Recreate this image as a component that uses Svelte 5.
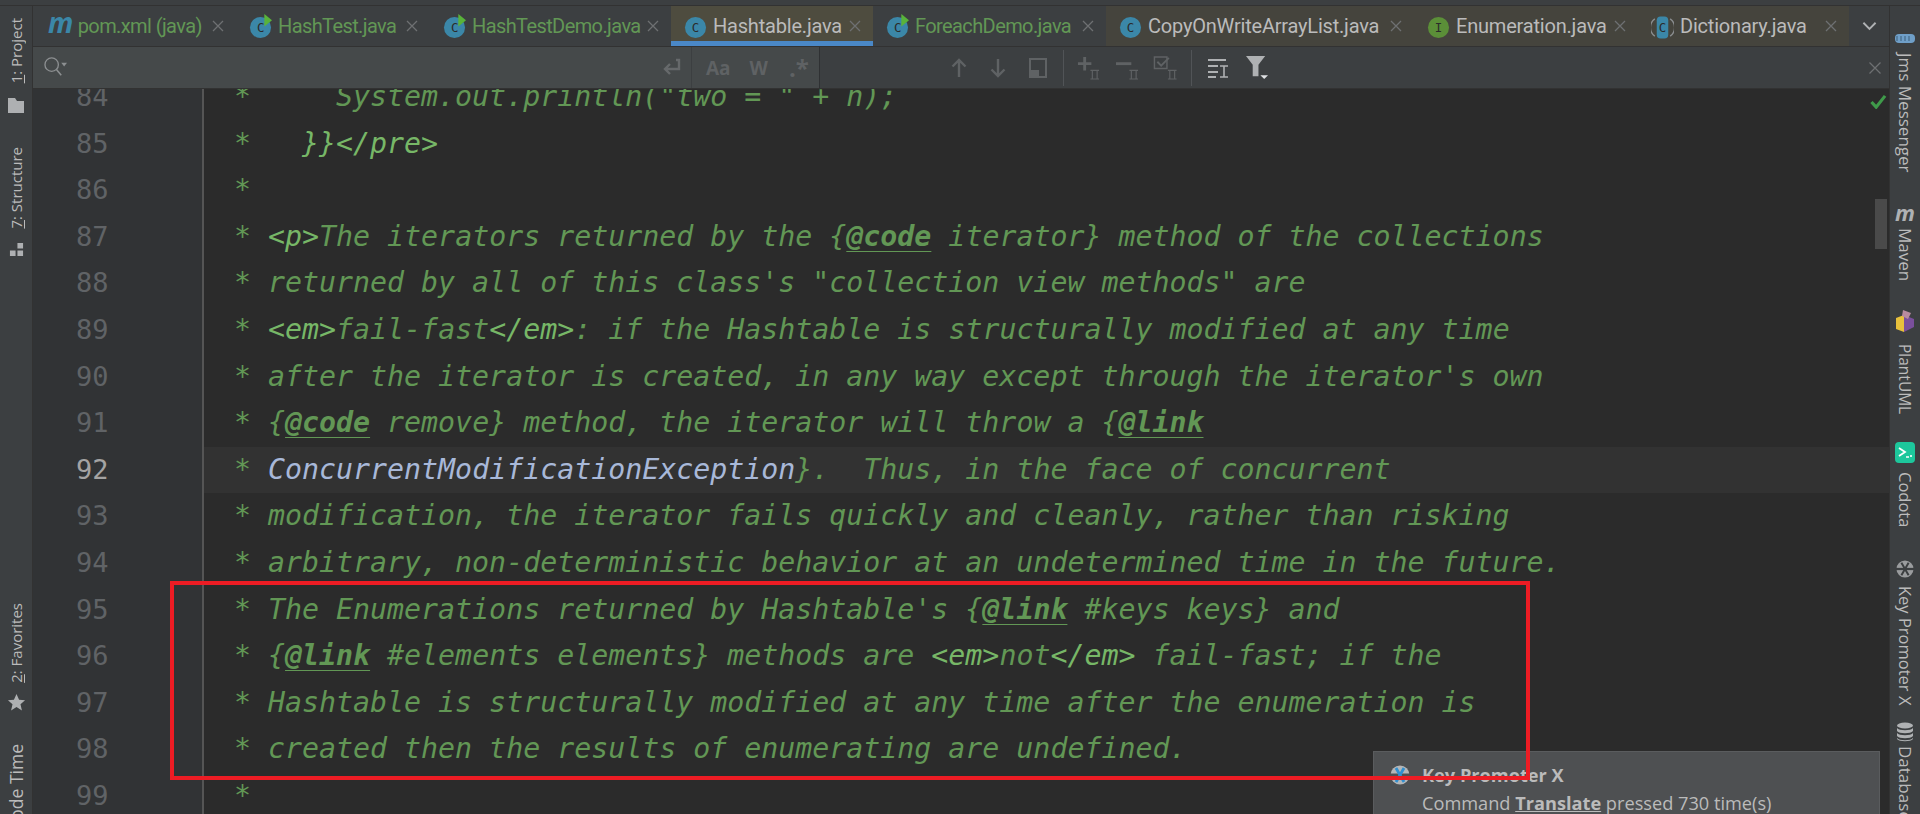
<script>
  const tabs = [
    { name: "pom.xml (java)", icon: "m", run: true, width: 203 },
    { name: "HashTest.java", icon: "c", run: true, width: 194 },
    { name: "HashTestDemo.java", icon: "c", run: true, width: 241 },
    { name: "Hashtable.java", icon: "c", active: true, width: 202 },
    { name: "ForeachDemo.java", icon: "c", run: true, width: 233 },
    { name: "CopyOnWriteArrayList.java", icon: "c", width: 308 },
    { name: "Enumeration.java", icon: "i", width: 224 },
    { name: "Dictionary.java", icon: "a", width: 211 },
  ];

  // t = tag, k = doc keyword, r = class reference, plain strings are comment text
  const lines = [
    [84, '*     System.out.println("two = " + n);'],
    [85, "*   ", { t: "}}</pre>" }],
    [86, "*"],
    [87, "* ", { t: "<p>" }, "The iterators returned by the {", { k: "@code" }, " iterator} method of the collections"],
    [88, '* returned by all of this class\'s "collection view methods" are'],
    [89, "* ", { t: "<em>" }, "fail-fast", { t: "</em>" }, ": if the Hashtable is structurally modified at any time"],
    [90, "* after the iterator is created, in any way except through the iterator's own"],
    [91, "* {", { k: "@code" }, " remove} method, the iterator will throw a {", { k: "@link" }],
    [92, "* ", { r: "ConcurrentModificationException" }, "}.  Thus, in the face of concurrent"],
    [93, "* modification, the iterator fails quickly and cleanly, rather than risking"],
    [94, "* arbitrary, non-deterministic behavior at an undetermined time in the future."],
    [95, "* The Enumerations returned by Hashtable's {", { k: "@link" }, " #keys keys} and"],
    [96, "* {", { k: "@link" }, " #elements elements} methods are ", { t: "<em>" }, "not", { t: "</em>" }, " fail-fast; if the"],
    [97, "* Hashtable is structurally modified at any time after the enumeration is"],
    [98, "* created then the results of enumerating are undefined."],
    [99, "*"],
  ];
</script>

{#snippet fileIcon(kind, run)}
  {#if kind === "m"}
    <span class="maven-m">m</span>
  {:else}
    <svg class="file-icon" viewBox="0 0 24 26" width="23" height="25">
      {#if kind === "a"}
        <path d="M4 5a11 11 0 0 0 0 18" fill="none" stroke="#8a8d8f" stroke-width="1.5" />
        <path d="M20 5a11 11 0 0 1 0 18" fill="none" stroke="#8a8d8f" stroke-width="1.5" />
        <rect x="6" y="2.5" width="12" height="23" rx="4" fill="#3b87a8" />
      {:else}
        <circle cx="12" cy="14" r="11" fill={kind === "i" ? "#5b8f38" : "#3b87a8"} />
      {/if}
      <text x="12" y="18.5" class="icon-letter">{kind === "i" ? "I" : "C"}</text>
      {#if run}
        <path d="M16 0l8 6.5-8 6.5z" fill="#59b33a" />
      {/if}
    </svg>
  {/if}
{/snippet}

{#snippet promoter(band, cross)}
  <svg viewBox="0 0 20 20" width="20" height="20">
    <circle cx="10" cy="10" r="9.5" fill="#b4b6b8" />
    <path d="M0 10h20" stroke={band} stroke-width="3" />
    <path d="M6 3l8 14M14 3L6 17" stroke={cross} stroke-width="2.8" />
  </svg>
{/snippet}

<div class="ide">
  <div class="top-strip"></div>
  <div class="body">
    <aside class="side left">
      <div class="side-group">
        <div class="tool first"><span class="vert"><u>1</u>: Project</span>
          <svg viewBox="0 0 16 15" width="16" height="15"><path d="M0 0h7l2 3h7v12H0z" fill="#aeb0b2" /></svg>
        </div>
        <div class="tool structure"><span class="vert"><u>7</u>: Structure</span>
          <svg viewBox="0 0 16 16" width="15" height="15"><path d="M9 1h6v6H9zM1 9h6v6H1zM9 9h6v6H9z" fill="#aeb0b2" /></svg>
        </div>
      </div>
      <div class="side-group bottom">
        <div class="tool favorites"><span class="vert"><u>2</u>: Favorites</span>
          <svg viewBox="0 0 20 20" width="19" height="19"><path d="M10 1l2.7 6 6.3.6-4.8 4.2 1.5 6.5L10 14.8l-5.7 3.5 1.5-6.5L1 7.6 7.3 7z" fill="#aeb0b2" /></svg>
        </div>
        <div class="tool code-time"><span class="vert">Code Time</span></div>
      </div>
    </aside>

    <main class="center">
      <div class="tabs">
        {#each tabs as tab}
          <div class="tab" class:run={tab.run} class:active={tab.active} style="width: {tab.width}px">
            {@render fileIcon(tab.icon, tab.run)}
            <span class="tab-name">{tab.name}</span>
            <svg class="tab-close" viewBox="0 0 12 12" width="12" height="12"><path d="M1 1l10 10M11 1L1 11" stroke="#6e7072" stroke-width="1.3" /></svg>
          </div>
        {/each}
        <div class="tab-more">
          <svg viewBox="0 0 16 10" width="15" height="10"><path d="M1.5 1.5L8 8l6.5-6.5" fill="none" stroke="#afb1b3" stroke-width="2" /></svg>
        </div>
      </div>

      <div class="find">
        <div class="find-input">
          <svg class="find-search" viewBox="0 0 26 24" width="25" height="23">
            <circle cx="9" cy="9" r="7" fill="none" stroke="#8c8f91" stroke-width="1.4" />
            <path d="M14 14l5 6" stroke="#8c8f91" stroke-width="1.6" />
            <path d="M19 7h6l-3 4z" fill="#8c8f91" />
          </svg>
          <svg class="find-wrap" viewBox="0 0 20 20" width="20" height="20">
            <path d="M15 2h3v9H5M9 6l-5 5 5 5" fill="none" stroke="#66696b" stroke-width="2.4" />
          </svg>
          <i class="opt-sep"></i>
          <span class="opt aa">Aa</span>
          <span class="opt w">W</span>
          <span class="opt rx">.*</span>
        </div>
        <div class="find-tools">
          <svg viewBox="0 0 16 20" width="16" height="20"><path d="M8 19V2M1.5 8.5L8 2l6.5 6.5" fill="none" stroke="#5f6264" stroke-width="2.4" /></svg>
          <svg class="m-down" viewBox="0 0 16 20" width="16" height="20"><path d="M8 1v17M1.5 11.5L8 18l6.5-6.5" fill="none" stroke="#5f6264" stroke-width="2.4" /></svg>
          <svg class="m-box" viewBox="0 0 18 20" width="18" height="20"><path d="M1 1h16v18H1z" fill="none" stroke="#5f6264" stroke-width="2" /><path d="M1 12h9v7H1z" fill="#5f6264" /></svg>
          <i class="sep s1"></i>
          <svg class="m-plus" viewBox="0 0 24 26" width="23" height="25"><path d="M8 2v14M1 9h14" stroke="#5f6264" stroke-width="3" /><path d="M14 16h9M14 25h9M16 16v9M21 16v9" stroke="#5f6264" stroke-width="1.2" /></svg>
          <svg class="m-minus" viewBox="0 0 24 26" width="23" height="25"><path d="M0 9h16" stroke="#5f6264" stroke-width="3" /><path d="M14 16h9M14 25h9M16 16v9M21 16v9" stroke="#5f6264" stroke-width="1.2" /></svg>
          <svg class="m-check" viewBox="0 0 25 26" width="25" height="25"><path d="M1 2h13v12H1z" fill="none" stroke="#5f6264" stroke-width="1.5" /><path d="M4 7l4 4 8-8" fill="none" stroke="#5f6264" stroke-width="2" /><path d="M15 16h9M15 25h9M17 16v9M22 16v9" stroke="#5f6264" stroke-width="1.2" /></svg>
          <i class="sep s2"></i>
          <svg class="m-sort" viewBox="0 0 20 20" width="20" height="20"><path d="M0 2h18M0 8h10M0 14h10M0 19h8" stroke="#afb1b3" stroke-width="2" /><path d="M12 8h8M12 19h8M16 8v11" stroke="#afb1b3" stroke-width="1.6" /></svg>
          <svg class="m-filter" viewBox="0 0 24 26" width="23" height="25"><path d="M0 1h20l-7 9v12H7V10z" fill="#afb1b3" /><path d="M15 21h8l-4 4z" fill="#dfe1e3" /></svg>
          <svg class="find-close" viewBox="0 0 12 12" width="12" height="12"><path d="M0.5 0.5l11 11M11.5 0.5l-11 11" stroke="#6e7072" stroke-width="1.3" /></svg>
        </div>
      </div>

      <div class="editor">
        <div class="lines">
          {#each lines as [num, ...parts]}
            <div class="line" class:current={num === 92}>
              <span class="num">{num}</span>
              <code class="code">{#each parts as part}{#if typeof part === "string"}{part}{:else if part.t}<span class="tag">{part.t}</span>{:else if part.k}<span class="key">{part.k}</span>{:else}<span class="ref">{part.r}</span>{/if}{/each}</code>
            </div>
          {/each}
        </div>

        <svg class="ok" viewBox="0 0 18 16" width="17" height="15"><path d="M1.5 8.5L6.5 14 16 2" fill="none" stroke="#3f9a4a" stroke-width="3.4" /></svg>
        <div class="thumb"></div>

        <div class="balloon">
          <div class="balloon-title">
            {@render promoter("#4e5052", "#2f8fd0")}
            <b>Key Promoter X</b>
          </div>
          <div class="balloon-body">Command <b><u>Translate</u></b> pressed 730 time(s)</div>
        </div>
        <div class="red-box"></div>
      </div>
    </main>

    <aside class="side right">
      <div class="tool r-jms">
        <svg viewBox="0 0 20 10" width="20" height="10"><rect x="0" y="1" width="20" height="9" rx="4" fill="#6f9fc8" /><path d="M2 3v5M6 3v5M10 3v5M14 3v5" stroke="#3c5f7a" stroke-width="1" /></svg>
        <span class="vert">Jms Messenger</span>
      </div>
      <div class="tool r-maven"><span class="maven-side">m</span><span class="vert">Maven</span></div>
      <div class="tool r-plant">
        <svg viewBox="0 0 20 24" width="20" height="24"><path d="M1 9l8-3v17l-8-3z" fill="#e8c13c" /><path d="M9 6l10 4v8l-10 5z" fill="#7a4f9c" /><path d="M8 1l8 3-3 6-6-3z" fill="#b98aa0" /></svg>
        <span class="vert">PlantUML</span>
      </div>
      <div class="tool r-codota">
        <svg viewBox="0 0 20 21" width="20" height="21"><rect width="20" height="21" rx="4" fill="#1dc79c" /><path d="M4 6l6 4-6 4" fill="none" stroke="#fff" stroke-width="1.8" /><path d="M11 15h3M16 13v2" stroke="#fff" stroke-width="1.6" /></svg>
        <span class="vert">Codota</span>
      </div>
      <div class="tool r-key">
        <svg viewBox="0 0 20 20" width="18" height="18"><circle cx="10" cy="10" r="9.5" fill="#9a9c9e" /><path d="M0 10h20" stroke="#3c3f41" stroke-width="2.5" /><path d="M6 3l8 14M14 3L6 17" stroke="#3c3f41" stroke-width="2.2" /></svg>
        <span class="vert">Key Promoter X</span>
      </div>
      <div class="tool r-db">
        <svg viewBox="0 0 18 20" width="18" height="20"><ellipse cx="9" cy="3.5" rx="8" ry="3" fill="#afb1b3" /><path d="M1 6c2 3 14 3 16 0v3c-2 3-14 3-16 0zM1 11c2 3 14 3 16 0v3c-2 3-14 3-16 0zM1 16c2 3 14 3 16 0v1c-2 3-14 3-16 0z" fill="#afb1b3" /></svg>
        <span class="vert">Database</span>
      </div>
    </aside>
  </div>
</div>

<style>
  :global(body) {
    margin: 0;
    background: #2b2b2b;
    overflow: hidden;
  }

  .ide {
    width: 1920px;
    height: 814px;
    display: flex;
    flex-direction: column;
    overflow: hidden;
    font-family: Roboto, "Open Sans", sans-serif;
  }

  .top-strip {
    height: 6px;
    flex: none;
    background: #3c3f41;
    border-bottom: 1px solid #323232;
    box-sizing: border-box;
  }

  .body {
    flex: 1;
    min-height: 0;
    display: flex;
  }

  /* tool window bars */
  .side {
    flex: none;
    background: #3c3f41;
    display: flex;
    flex-direction: column;
    color: #bbbbbb;
    font-family: "Open Sans", sans-serif;
    font-size: 17px;
    overflow: hidden;
    box-sizing: border-box;
  }

  .side.left {
    width: 33px;
    justify-content: space-between;
    border-right: 1px solid #323232;
    font-size: 15px;
  }

  .side.right {
    width: 31px;
    padding-top: 27px;
    border-left: 1px solid #323232;
  }

  .side-group {
    flex: none;
  }

  .side-group.bottom {
    margin-bottom: -17px;
  }

  .tool {
    flex: none;
    display: flex;
    flex-direction: column;
    align-items: center;
  }

  .vert {
    writing-mode: vertical-rl;
    white-space: nowrap;
    line-height: 20px;
  }

  .left .vert {
    transform: rotate(180deg);
  }

  .tool.first {
    padding-top: 12px;
    gap: 15px;
  }

  .tool.structure {
    padding-top: 34px;
    gap: 13px;
  }

  .tool.favorites {
    gap: 10px;
  }

  .tool.code-time {
    margin-top: 32px;
    font-size: 17.5px;
  }

  .r-jms {
    gap: 10px;
  }

  .r-maven {
    margin-top: 28px;
    gap: 5px;
  }

  .r-plant {
    margin-top: 28px;
    gap: 11px;
    font-size: 15.5px;
  }

  .r-codota {
    margin-top: 28px;
    gap: 9px;
    font-size: 16.5px;
  }

  .r-key {
    margin-top: 33px;
    gap: 8px;
    font-size: 16.5px;
  }

  .r-db {
    margin-top: 16px;
    gap: 4px;
  }

  .maven-side {
    font: italic bold 22px/22px "Open Sans", sans-serif;
    color: #afb1b3;
  }

  /* editor tabs */
  .center {
    flex: 1;
    min-width: 0;
    display: flex;
    flex-direction: column;
  }

  .tabs {
    height: 40px;
    flex: none;
    display: flex;
    background: #3c3f41;
    border-bottom: 1px solid #323232;
  }

  .tab {
    flex: none;
    display: flex;
    align-items: center;
    padding: 0 12px 0 13px;
    gap: 6px;
    background: #45443d;
    color: #bbbbbb;
    font-size: 20px;
    letter-spacing: -0.2px;
    white-space: nowrap;
    box-sizing: border-box;
  }

  .tab.run {
    background: #3c3f41;
    color: #629755;
    letter-spacing: -0.6px;
  }

  .tab.active {
    background: #4e4c3f;
    box-shadow: inset 0 -5px 0 #4a88c7;
  }

  .tab-close {
    margin-left: auto;
  }

  .tab-more {
    flex: 1;
    display: flex;
    align-items: center;
    justify-content: center;
  }

  .file-icon {
    flex: none;
  }

  .icon-letter {
    font: 13px "DejaVu Sans Mono", monospace;
    fill: #2b2b2b;
    text-anchor: middle;
  }

  .maven-m {
    font: italic bold 28px/28px "Open Sans", sans-serif;
    color: #3b87a8;
    margin-top: -8px;
    margin-left: 2px;
    margin-right: -1px;
  }

  /* find bar */
  .find {
    height: 42px;
    flex: none;
    display: flex;
    background: #3c3f41;
    border-bottom: 1px solid #323232;
    box-sizing: border-box;
  }

  .find-input {
    width: 787px;
    flex: none;
    display: flex;
    align-items: center;
    background: #45494a;
    border-right: 1px solid #2f3133;
    box-sizing: border-box;
    color: #5f6264;
    font: bold 19px "Open Sans", sans-serif;
  }

  .find-search {
    margin-left: 10px;
  }

  .find-wrap {
    margin-left: 593px;
  }

  .opt-sep {
    width: 1px;
    height: 41px;
    margin-left: 10px;
    background: #3c3f41;
  }

  .opt.aa {
    margin-left: 14px;
  }

  .opt.w {
    margin-left: 19px;
  }

  .opt.rx {
    margin-left: 21px;
    font-size: 24px;
  }

  .find-tools {
    flex: 1;
    display: flex;
    align-items: center;
    padding-left: 131px;
  }

  .m-down {
    margin-left: 23px;
  }

  .m-box {
    margin-left: 23px;
  }

  .sep {
    width: 1px;
    height: 36px;
    background: #515457;
  }

  .s1 {
    margin-left: 16px;
  }

  .m-plus {
    margin-left: 13px;
  }

  .m-minus {
    margin-left: 16px;
  }

  .m-check {
    margin-left: 14px;
  }

  .s2 {
    margin-left: 13px;
  }

  .m-sort {
    margin-left: 16px;
  }

  .m-filter {
    margin-left: 18px;
  }

  .find-close {
    margin-left: auto;
    margin-right: 8px;
  }

  /* code area */
  .editor {
    flex: 1;
    min-height: 0;
    position: relative;
    overflow: hidden;
    background: #2b2b2b;
  }

  .lines {
    margin-top: -15px;
  }

  .line {
    display: flex;
    height: 46.6px;
    line-height: 46.6px;
    font-family: "DejaVu Sans Mono", monospace;
    font-size: 28.25px;
  }

  .line.current {
    background: #323232;
  }

  .num {
    width: 171px;
    flex: none;
    box-sizing: border-box;
    padding-left: 43px;
    background: #313335;
    border-right: 2px solid #555555;
    color: #606366;
    font-size: 27px;
  }

  .current .num {
    color: #a4a3a3;
  }

  .code {
    font: inherit;
    font-style: italic;
    color: #629755;
    padding-left: 30px;
    white-space: pre;
  }

  .tag {
    color: #77b767;
  }

  .key {
    font-weight: bold;
    text-decoration: underline;
    text-underline-offset: 5px;
    text-decoration-thickness: 1px;
  }

  .ref {
    color: #a8b8d8;
  }

  .ok {
    position: absolute;
    right: 2px;
    top: 5px;
  }

  .thumb {
    position: absolute;
    right: 2px;
    top: 110px;
    width: 12px;
    height: 50px;
    background: #4a4a4a;
  }

  .balloon {
    position: absolute;
    left: 1340px;
    top: 662px;
    width: 507px;
    height: 80px;
    box-sizing: border-box;
    padding: 11px 0 0 16px;
    background: #4e5052;
    border: 1px solid #5a5c5e;
    color: #bbbbbb;
    font: 18.2px "Open Sans", sans-serif;
  }

  .balloon-title {
    display: flex;
    align-items: center;
    gap: 12px;
  }

  .balloon-body {
    margin: 4px 0 0 32px;
  }

  .red-box {
    position: absolute;
    left: 137px;
    top: 492px;
    width: 1360px;
    height: 199px;
    box-sizing: border-box;
    border: 4px solid #ed1c24;
  }
</style>
